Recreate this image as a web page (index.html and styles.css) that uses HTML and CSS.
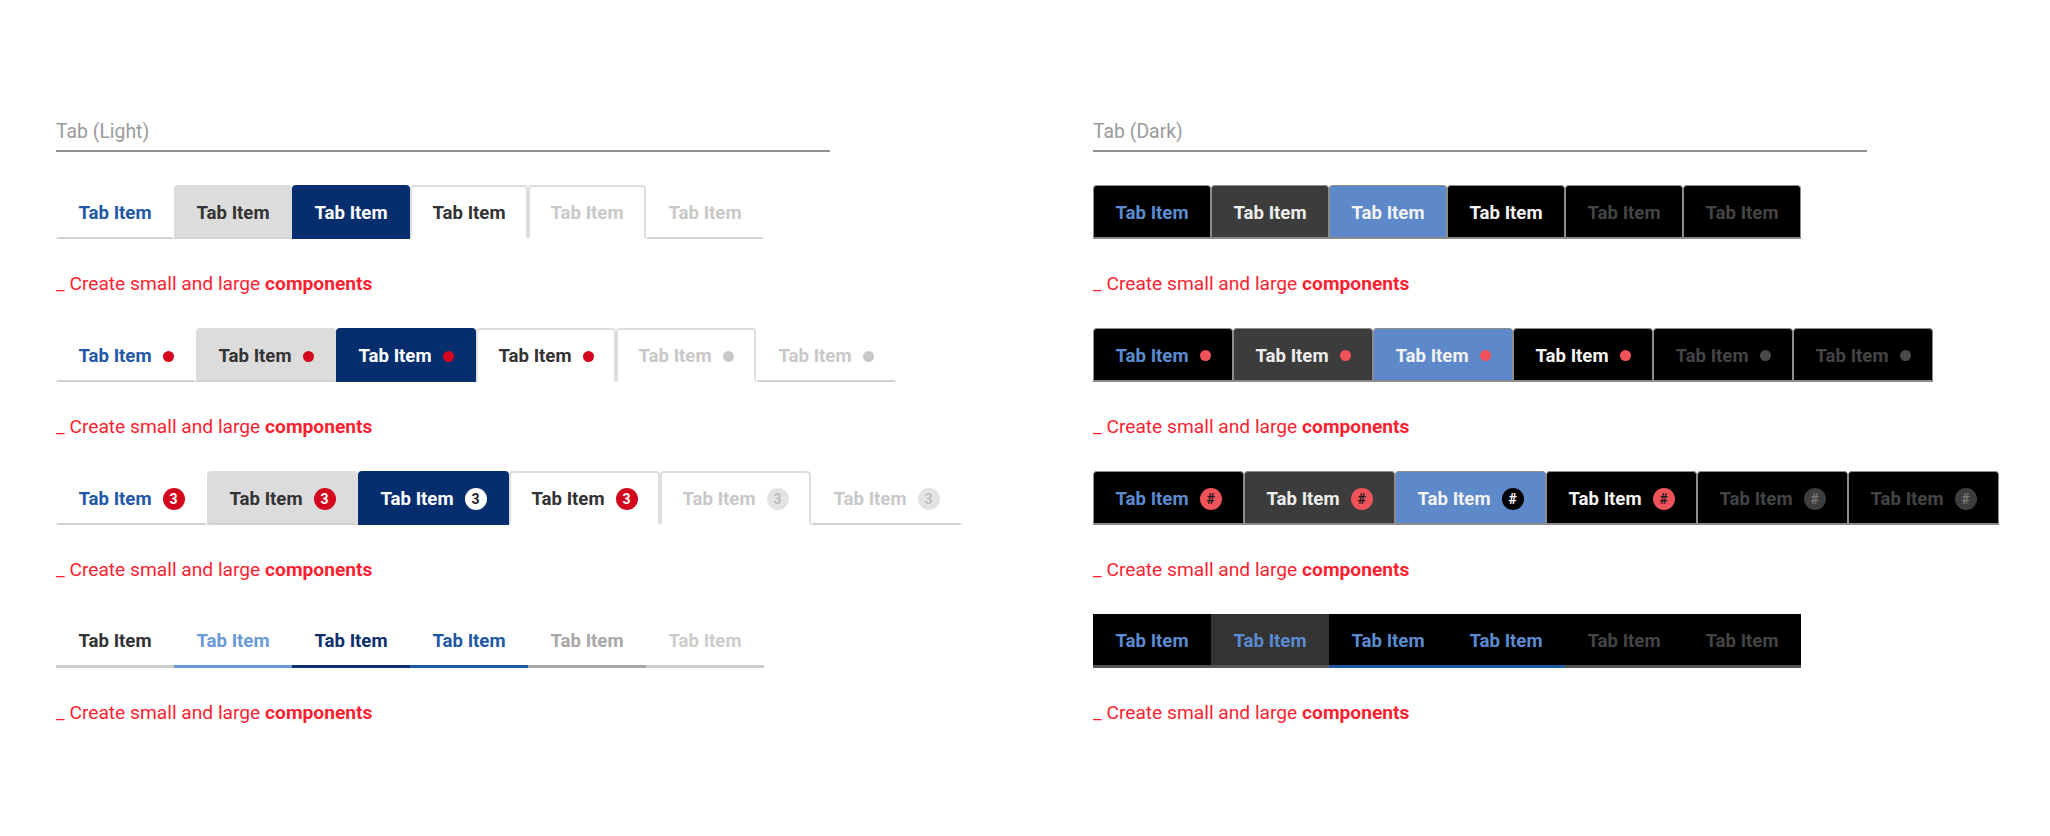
FILE: index.html
```html
<!DOCTYPE html>
<html>
<head>
<meta charset="utf-8">
<link rel="stylesheet" href="styles.css">
</head>
<body>
<div class="page">
  <section class="section light">
    <div class="title">Tab (Light)</div>

    <div class="tabs basic">
      <div class="tab t-active">Tab Item</div>
      <div class="tab t-hover">Tab Item</div>
      <div class="tab t-pressed">Tab Item</div>
      <div class="tab t-selected">Tab Item</div>
      <div class="tab t-selected t-disabled">Tab Item</div>
      <div class="tab t-disabled t-line">Tab Item</div>
    </div>
    <p class="caption">_ Create small and large <b>components</b></p>

    <div class="tabs dots">
      <div class="tab t-active">Tab Item<span class="dot"></span></div>
      <div class="tab t-hover">Tab Item<span class="dot"></span></div>
      <div class="tab t-pressed">Tab Item<span class="dot"></span></div>
      <div class="tab t-selected">Tab Item<span class="dot"></span></div>
      <div class="tab t-selected t-disabled">Tab Item<span class="dot"></span></div>
      <div class="tab t-disabled t-line">Tab Item<span class="dot"></span></div>
    </div>
    <p class="caption">_ Create small and large <b>components</b></p>

    <div class="tabs badges">
      <div class="tab t-active">Tab Item<span class="badge">3</span></div>
      <div class="tab t-hover">Tab Item<span class="badge">3</span></div>
      <div class="tab t-pressed">Tab Item<span class="badge">3</span></div>
      <div class="tab t-selected">Tab Item<span class="badge">3</span></div>
      <div class="tab t-selected t-disabled">Tab Item<span class="badge">3</span></div>
      <div class="tab t-disabled t-line">Tab Item<span class="badge">3</span></div>
    </div>
    <p class="caption">_ Create small and large <b>components</b></p>

    <div class="tabs under">
      <div class="tab u1">Tab Item</div>
      <div class="tab u2">Tab Item</div>
      <div class="tab u3">Tab Item</div>
      <div class="tab u4">Tab Item</div>
      <div class="tab u5">Tab Item</div>
      <div class="tab u6">Tab Item</div>
    </div>
    <p class="caption">_ Create small and large <b>components</b></p>
  </section>

  <section class="section dark">
    <div class="title">Tab (Dark)</div>

    <div class="tabs basic">
      <div class="tab d-active">Tab Item</div>
      <div class="tab d-hover">Tab Item</div>
      <div class="tab d-pressed">Tab Item</div>
      <div class="tab d-selected">Tab Item</div>
      <div class="tab d-disabled">Tab Item</div>
      <div class="tab d-disabled">Tab Item</div>
    </div>
    <p class="caption">_ Create small and large <b>components</b></p>

    <div class="tabs dots">
      <div class="tab d-active">Tab Item<span class="dot"></span></div>
      <div class="tab d-hover">Tab Item<span class="dot"></span></div>
      <div class="tab d-pressed">Tab Item<span class="dot"></span></div>
      <div class="tab d-selected">Tab Item<span class="dot"></span></div>
      <div class="tab d-disabled">Tab Item<span class="dot"></span></div>
      <div class="tab d-disabled">Tab Item<span class="dot"></span></div>
    </div>
    <p class="caption">_ Create small and large <b>components</b></p>

    <div class="tabs badges">
      <div class="tab d-active">Tab Item<span class="badge">#</span></div>
      <div class="tab d-hover">Tab Item<span class="badge">#</span></div>
      <div class="tab d-pressed">Tab Item<span class="badge">#</span></div>
      <div class="tab d-selected">Tab Item<span class="badge">#</span></div>
      <div class="tab d-disabled">Tab Item<span class="badge">#</span></div>
      <div class="tab d-disabled">Tab Item<span class="badge">#</span></div>
    </div>
    <p class="caption">_ Create small and large <b>components</b></p>

    <div class="tabs under dark-under">
      <div class="tab du1">Tab Item</div>
      <div class="tab du2">Tab Item</div>
      <div class="tab du3">Tab Item</div>
      <div class="tab du4">Tab Item</div>
      <div class="tab du5">Tab Item</div>
      <div class="tab du6">Tab Item</div>
    </div>
    <p class="caption">_ Create small and large <b>components</b></p>
  </section>
</div>
</body>
</html>
```

FILE: styles.css
```css
* { box-sizing: border-box; }

body {
  margin: 0;
  background: #ffffff;
  font-family: Roboto, "Liberation Sans", Arial, sans-serif;
}

.page {
  display: flex;
  gap: 263px;
  padding: 120px 0 0 56px;
}

.section {
  width: 774px;
  flex-shrink: 0;
}

.title {
  font-size: 19.4px;
  line-height: 24px;
  color: #9b9b9b;
  padding-bottom: 6px;
  border-bottom: 2px solid #8e8e8e;
  margin-bottom: 33px;
}

.caption {
  margin: 33px 0 32px;
  font-size: 19.2px;
  line-height: 24px;
  color: #ff1e30;
  white-space: nowrap;
}

.caption b { font-weight: 700; }

.tabs {
  display: flex;
  width: max-content;
  height: 54px;
}

.tab {
  flex-shrink: 0;
  height: 54px;
  display: flex;
  align-items: center;
  justify-content: center;
  gap: 11px;
  padding-top: 2px;
  font-size: 18.6px;
  font-weight: 700;
  border: 2px solid transparent;
  border-radius: 4px 4px 0 0;
  white-space: nowrap;
}

.basic .tab { width: 118px; }
.dots .tab { width: 140px; }
.badges .tab { width: 151px; }

.dot {
  width: 11px;
  height: 11px;
  border-radius: 50%;
  background: #d3081f;
}

.badge {
  width: 22px;
  height: 22px;
  border-radius: 50%;
  background: #d3081f;
  color: #ffffff;
  font-size: 14px;
  font-weight: 700;
  display: flex;
  align-items: center;
  justify-content: center;
}

/* ---------- Light ---------- */
.t-active {
  color: #1f58a6;
  border-bottom-color: #d2d2d2;
  border-radius: 0;
}
.t-hover {
  background: #dcdcdc;
  color: #333333;
  border-color: #dcdcdc;
  border-bottom-color: #d2d2d2;
}
.t-pressed {
  background: #062e6f;
  border-color: #062e6f;
  color: #ffffff;
}
.t-pressed .badge { background: #ffffff; color: #222222; }
.t-selected {
  color: #333333;
  border-color: #dedede;
  border-bottom-color: transparent;
}
.t-disabled { color: #c8c8c8; }
.t-disabled .dot { background: #c8c8c8; }
.t-disabled .badge { background: #e3e3e3; color: #bdbdbd; }
.t-line {
  border-bottom-color: #d2d2d2;
  border-radius: 0;
}

/* underline variant */
.under .tab {
  width: 118px;
  border-radius: 0;
  border-width: 0 0 3px 0;
  border-bottom-color: #cccccc;
}
.u1 { color: #333333; }
.u2 { color: #6a9ad8; }
.under .u2 { border-bottom-color: #6a9ad8; }
.u3 { color: #0c2f6e; }
.under .u3 { border-bottom-color: #0c2f6e; }
.u4 { color: #1f58a6; }
.under .u4 { border-bottom-color: #1f58a6; }
.u5 { color: #a8a8a8; }
.under .u5 { border-bottom-color: #a8a8a8; }
.u6 { color: #cccccc; }
.under .u6 { border-bottom-color: #cccccc; }

/* ---------- Dark ---------- */
.dark .tabs:not(.under) .tab {
  border: 1px solid #8c8c8c;
  border-bottom: 2px solid #8c8c8c;
}
.dark .dot { background: #f0525a; }
.dark .badge { background: #f0525a; color: #1a1a1a; }

.d-active { background: #000000; color: #5b8bd0; }
.d-hover { background: #3c3c3c; color: #eeeeee; }
.d-pressed { background: #5d89ca; color: #f2f2f2; }
.d-pressed .badge { background: #000000; color: #ffffff; }
.d-selected { background: #000000; color: #f5f5f5; }
.d-disabled { background: #000000; color: #444444; }
.dark .d-disabled .dot { background: #4a4a4a; }
.dark .d-disabled .badge { background: #3e3e3e; color: #767676; }

.dark-under { background: #000000; }
.dark-under .tab { color: #5b8bd0; }
.under.dark-under .tab { border-bottom-color: #555555; }
.dark-under .du2 { background: #333333; }
.under.dark-under .du3,
.under.dark-under .du4 { border-bottom-color: #1f58a6; }
.dark-under .du5,
.dark-under .du6 { color: #444444; }
```
